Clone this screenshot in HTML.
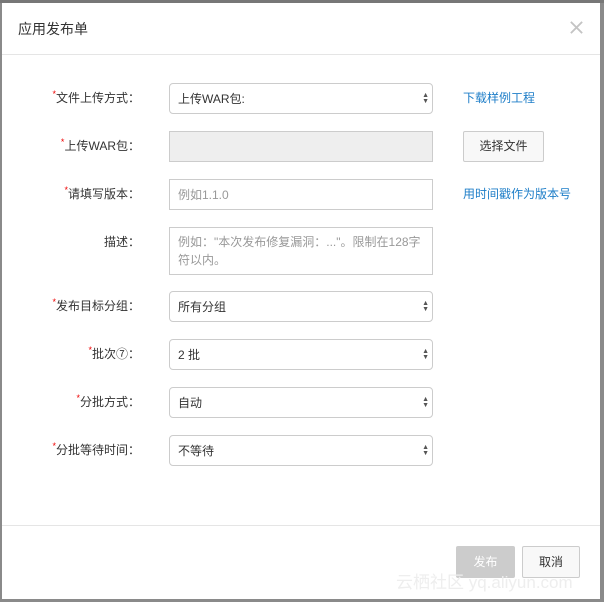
<!DOCTYPE html>
<html><head><meta charset="utf-8"><style>
html,body{margin:0;width:604px;height:602px;overflow:hidden}
body{background:#8a8a8a;position:relative;font-family:"Liberation Sans","Noto Sans CJK SC",sans-serif;font-size:12px;color:#333}
.top{position:absolute;left:0;top:0;width:604px;height:3px;background:#777}
.modal{position:absolute;left:2px;top:3px;width:598px;height:596px;background:#fff;overflow:hidden}
.hd{position:absolute;left:0;top:0;width:598px;height:51px;border-bottom:1px solid #e5e5e5}
.hd .t{position:absolute;left:16px;top:16px;font-size:14px;color:#333}
.x{position:absolute;left:567px;top:17px;width:15px;height:15px}
.lbl{position:absolute;left:0;width:138px;text-align:right;color:#333}
.lbl i{color:#e00;font-style:normal;font-size:9px;vertical-align:top}
.f{position:absolute;left:167px;width:262px;height:29px;border:1px solid #ccc;border-radius:4px}
.f span{position:absolute;left:8px;top:6px}
.ph{color:#999}
.arr{position:absolute;right:3px;top:9px;font-size:7px;line-height:6px;color:#555}
.lnk{position:absolute;left:461px;color:#1e7ec8}
.btn{position:absolute;border:1px solid #ccc;background:#f8f8f8;text-align:center;border-radius:2px}
.ft{position:absolute;left:0;top:522px;width:598px;border-top:1px solid #e5e5e5}
</style></head><body>
<div class="top"></div>
<div class="modal">
<div class="hd"><div class="t">应用发布单</div>
<svg class="x" viewBox="0 0 16 16"><path d="M2 2L14 14M14 2L2 14" stroke="#c4c4c4" stroke-width="2"/></svg></div>

<div class="lbl" style="top:86px"><i>*</i>文件上传方式：</div>
<div class="f" style="top:80px"><span>上传WAR包:</span><div class="arr">▲<br>▼</div></div>
<div class="lnk" style="top:86px">下载样例工程</div>

<div class="lbl" style="top:134px"><i>*</i>上传WAR包：</div>
<div class="f" style="top:128px;background:#eee;border-radius:0"></div>
<div class="btn" style="left:461px;top:128px;width:79px;height:29px;line-height:29px">选择文件</div>

<div class="lbl" style="top:182px"><i>*</i>请填写版本：</div>
<div class="f" style="top:176px;border-radius:0"><span class="ph">例如1.1.0</span></div>
<div class="lnk" style="top:182px">用时间戳作为版本号</div>

<div class="lbl" style="top:230px">描述：</div>
<div class="f" style="top:224px;height:46px;border-radius:0"><span class="ph" style="top:5px;line-height:18px;width:244px">例如："本次发布修复漏洞：..."。限制在128字符以内。</span></div>

<div class="lbl" style="top:294px"><i>*</i>发布目标分组：</div>
<div class="f" style="top:288px"><span>所有分组</span><div class="arr">▲<br>▼</div></div>

<div class="lbl" style="top:342px"><i>*</i>批次⑦：</div>
<div class="f" style="top:336px"><span>2 批</span><div class="arr">▲<br>▼</div></div>

<div class="lbl" style="top:390px"><i>*</i>分批方式：</div>
<div class="f" style="top:384px"><span>自动</span><div class="arr">▲<br>▼</div></div>

<div class="lbl" style="top:438px"><i>*</i>分批等待时间：</div>
<div class="f" style="top:432px"><span>不等待</span><div class="arr">▲<br>▼</div></div>

<div class="ft"></div>
<div class="btn" style="left:454px;top:543px;width:57px;height:30px;line-height:30px;background:#ccc;border-color:#ccc;color:#fff">发布</div>
<div class="btn" style="left:520px;top:543px;width:56px;height:30px;line-height:30px">取消</div>
<div style="position:absolute;left:394px;top:565px;font-size:17px;color:#eee;white-space:nowrap">云栖社区 yq.aliyun.com</div>
</div>
</body></html>
